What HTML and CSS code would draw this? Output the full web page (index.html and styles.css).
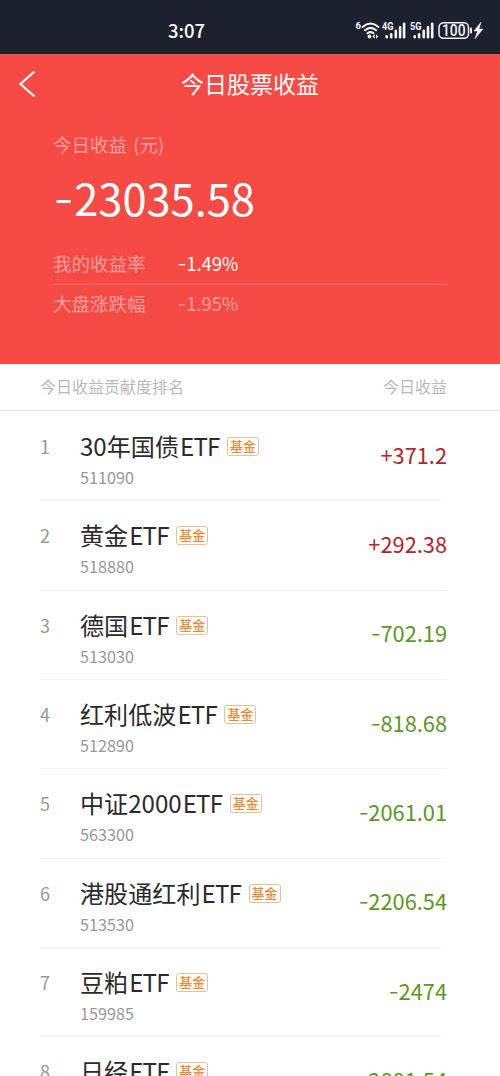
FILE: index.html
```html
<!DOCTYPE html>
<html lang="zh-CN">
<head>
<meta charset="utf-8">
<title>今日股票收益</title>
<link rel="stylesheet" href="styles.css">
</head>
<body>
<div class="screen">
  <div class="status">
    <span class="time">3:07</span>
    <svg class="status-icons" width="132" height="24" viewBox="0 0 132 24">
      <g fill="none" stroke="#f3f4f6" stroke-width="2" stroke-linecap="round">
        <path d="M7.500 8.900Q15.500 2.200 23.500 8.900"/>
        <path d="M10 12.300Q15.500 7.500 21.200 12.300"/>
        <path d="M12.500 15.300Q15.500 13 18.500 15.300"/>
      </g>
      <circle cx="14.500" cy="18.500" r="1.900" fill="#f3f4f6"/>
      <path d="M17.400 18.500l2.300-2.300v4.600zM23.400 18.500l-2.300-2.300v4.600z" fill="#f3f4f6"/>
      <g class="tiny" fill="#f3f4f6">
        <text x="0.500" y="10.500" font-size="9.500">6</text>
        <text x="27" y="12" font-size="10.500" textLength="11.500" lengthAdjust="spacingAndGlyphs">4G</text>
        <text x="55" y="12" font-size="10.500" textLength="11.500" lengthAdjust="spacingAndGlyphs">5G</text>
      </g>
      <g stroke="#f3f4f6" stroke-width="2.600" stroke-linecap="round">
        <path d="M31.700 18.200v1M36.200 16.200v3M40.800 12.700v6.500M45.100 9.200v10M49.100 5.700v13.500"/>
        <path d="M59.700 18.200v1M64.100 16.200v3M68.700 12.700v6.500M73 9.200v10M77.200 5.700v13.500"/>
      </g>
      <rect x="84" y="4.700" width="29.500" height="15.500" rx="4.500" fill="none" stroke="#f3f4f6" stroke-width="1.500"/>
      <path d="M116 10.400v4" stroke="#f3f4f6" stroke-width="2" stroke-linecap="round"/>
      <text class="charge" x="87" y="17.900" textLength="23.500" lengthAdjust="spacingAndGlyphs">100</text>
      <path d="M126 4.200l-7 8.700h3.700l-2.700 7.800 7.800-9.600h-3.900z" fill="#f3f4f6" stroke="#f3f4f6" stroke-width=".6"/>
    </svg>
  </div>

  <header class="hero">
    <div class="navbar">
      <svg class="back" width="20" height="30" viewBox="0 0 20 30"><path d="M16.500 3.500L2.500 16 16.500 28.500" fill="none" stroke="#fff" stroke-width="2.200"/></svg>
      <h1 class="title">今日股票收益</h1>
    </div>
    <div class="summary">
      <div class="caption">今日收益 (元)</div>
      <div class="total"><span class="minus">-</span>23035.58</div>
      <div class="stat"><span class="stat-name">我的收益率</span><span class="rate"><span class="minus">-</span>1.49<span class="pct">%</span></span></div>
      <div class="stat market"><span class="stat-name">大盘涨跌幅</span><span class="rate"><span class="minus">-</span>1.95<span class="pct">%</span></span></div>
    </div>
  </header>

  <div class="list-head"><span>今日收益贡献度排名</span><span>今日收益</span></div>
  <ol class="list">
    <li class="row"><span class="rank">1</span><div class="fund"><div class="name">30年国债<span class="etf">ETF</span><span class="tag">基金</span></div><div class="code">511090</div></div><span class="amount up">+371.2</span></li>
    <li class="row"><span class="rank">2</span><div class="fund"><div class="name">黄金<span class="etf">ETF</span><span class="tag">基金</span></div><div class="code">518880</div></div><span class="amount up">+292.38</span></li>
    <li class="row"><span class="rank">3</span><div class="fund"><div class="name">德国<span class="etf">ETF</span><span class="tag">基金</span></div><div class="code">513030</div></div><span class="amount down"><span class="minus">-</span>702.19</span></li>
    <li class="row"><span class="rank">4</span><div class="fund"><div class="name">红利低波<span class="etf">ETF</span><span class="tag">基金</span></div><div class="code">512890</div></div><span class="amount down"><span class="minus">-</span>818.68</span></li>
    <li class="row"><span class="rank">5</span><div class="fund"><div class="name">中证2000<span class="etf">ETF</span><span class="tag">基金</span></div><div class="code">563300</div></div><span class="amount down"><span class="minus">-</span>2061.01</span></li>
    <li class="row"><span class="rank">6</span><div class="fund"><div class="name">港股通红利<span class="etf">ETF</span><span class="tag">基金</span></div><div class="code">513530</div></div><span class="amount down"><span class="minus">-</span>2206.54</span></li>
    <li class="row"><span class="rank">7</span><div class="fund"><div class="name">豆粕<span class="etf">ETF</span><span class="tag">基金</span></div><div class="code">159985</div></div><span class="amount down"><span class="minus">-</span>2474</span></li>
    <li class="row"><span class="rank">8</span><div class="fund"><div class="name">日经<span class="etf">ETF</span><span class="tag">基金</span></div></div><span class="amount down"><span class="minus">-</span>2881.54</span></li>
  </ol>
</div>
</body>
</html>
```
FILE: styles.css
```css
* { box-sizing: border-box; }
body {
  margin: 0;
  background: #fefefe;
  font-family: "Noto Sans CJK SC", sans-serif;
}
.screen { width: 500px; height: 1076px; overflow: hidden; }

.status {
  height: 54px;
  padding: 18px 13px 0 168px;
  display: flex;
  justify-content: space-between;
  background: #1d212e;
}
.time { color: #fff; font-size: 18.5px; font-weight: 500; line-height: 24px; }
.status-icons { display: block; }
.tiny { font-weight: 700; font-family: Roboto, sans-serif; }
.charge { fill: #f3f4f6; font-size: 16px; font-weight: 500; font-family: Roboto, sans-serif; }

.hero { height: 310px; background: #f64a45; color: #fff; }
.navbar {
  height: 58px;
  padding: 0 18px;
  display: grid;
  grid-template-columns: 20px 1fr 20px;
  align-items: center;
}
.back { display: block; }
.title { margin: 0; font-size: 23px; font-weight: 400; line-height: 34px; text-align: center; }
.summary { padding: 18px 53px 0 53px; }
.caption { font-size: 18.5px; line-height: 28px; opacity: .45; word-spacing: 2px; }
.total { height: 60px; margin-top: 9px; font-size: 43.4px; line-height: 60px; }
.total .minus { width: .49em; }
.stat {
  height: 36px;
  margin-top: 22px;
  display: flex;
  border-bottom: 1px solid rgba(255, 255, 255, .2);
  font-size: 18.5px;
  line-height: 28px;
}
.stat-name { width: 125px; opacity: .45; }
.market { margin-top: 0; padding-top: 4px; border-bottom: 0; }
.market .rate { opacity: .45; }

.minus {
  display: inline-block;
  width: .44em;
  text-align: center;
  transform: translateY(-.05em) scaleX(1.25);
}
.pct { display: inline-block; transform: scaleX(.95); transform-origin: left; }

.list-head {
  height: 47px;
  padding: 0 53px 0 40px;
  display: flex;
  justify-content: space-between;
  border-bottom: 1px solid #e9e9e9;
  color: #bababa;
  font-size: 16px;
  line-height: 45px;
}
.list { margin: 0; padding: 0 53px 0 40px; list-style: none; }
.row { height: 89.33px; display: flex; border-bottom: 1px solid #f3f3f3; }
.row:first-child { height: 90.4px; padding-top: 1px; }
.rank { width: 40px; padding-top: 20px; color: #999; font-size: 18px; line-height: 28px; }
.fund { flex: 1; padding-top: 17px; }
.name { display: flex; align-items: center; font-size: 24.1px; line-height: 34px; color: #2b2b2b; }
.etf { padding-left: 1px; letter-spacing: -.8px; }
.tag {
  width: 32px;
  height: 19px;
  margin: 1px 0 0 7.5px;
  border: 1px solid #edc08f;
  border-radius: 3px;
  color: #ee8a33;
  font-size: 13px;
  font-weight: 500;
  line-height: 16px;
  text-align: center;
}
.code { margin-top: 2px; font-size: 16.2px; line-height: 24px; color: #999; }
.amount { padding-top: 26.5px; font-size: 21.8px; line-height: 32px; }
.up { color: #b8232b; }
.down { color: #5a9a1c; }
```
